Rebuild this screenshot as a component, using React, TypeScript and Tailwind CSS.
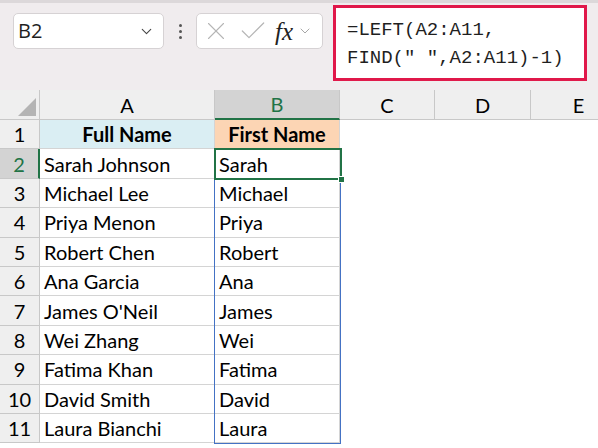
import { ChevronDown, X, Check } from 'lucide-react';

const rows: [string, string][] = [
    ['Sarah Johnson', 'Sarah'],
    ['Michael Lee', 'Michael'],
    ['Priya Menon', 'Priya'],
    ['Robert Chen', 'Robert'],
    ['Ana Garcia', 'Ana'],
    ["James O'Neil", 'James'],
    ['Wei Zhang', 'Wei'],
    ['Fatima Khan', 'Fatima'],
    ['David Smith', 'David'],
    ['Laura Bianchi', 'Laura'],
];

const cellFont = { fontFamily: 'Lato, "Open Sans", sans-serif' };

export default function App() {
    return (
        <div className="w-[598px] h-[448px] overflow-hidden bg-white" style={cellFont}>
            {/* formula bar */}
            <div className="h-[90px] bg-[#f0ecee] border-t-[3px] border-[#dcd8da] flex items-start pt-[10px] pl-[13px]">
                <div className="w-[151px] h-[36px] bg-white border border-[#d6d2d4] rounded-[5px] flex items-center justify-between pl-[4px] pr-[8px]">
                    <span className="text-[20px] text-[#1f1f1f]" style={{ fontFamily: '"Open Sans", sans-serif' }}>
                        B2
                    </span>
                    <ChevronDown size={17} strokeWidth={1.5} className="text-[#444]" />
                </div>
                <div className="w-[32px] h-[36px] flex flex-col items-center justify-center gap-[3px]">
                    <span className="w-[3px] h-[3px] rounded-full bg-[#555]" />
                    <span className="w-[3px] h-[3px] rounded-full bg-[#555]" />
                    <span className="w-[3px] h-[3px] rounded-full bg-[#555]" />
                </div>
                <div className="w-[127px] h-[36px] bg-white border border-[#d6d2d4] rounded-[5px] flex items-center pl-[4px] pr-[2px] gap-[4px]">
                    <X size={30} strokeWidth={0.9} className="text-[#b5b5b5]" />
                    <Check size={32} strokeWidth={0.9} className="text-[#b5b5b5] ml-[2px]" />
                    <span
                        className="text-[25px] italic text-[#222] leading-none ml-[2px]"
                        style={{ fontFamily: '"Liberation Serif", serif' }}
                    >
                        fx
                    </span>
                    <ChevronDown size={16} strokeWidth={1.3} className="text-[#999]" />
                </div>
                <div className="ml-[10px] -mt-[8px] w-[254px] h-[76px] bg-white border-[3px] border-[#e0184a] pl-[11px] pt-[8px]">
                    <div
                        className="text-[19px] leading-[28px] text-[#1f1f1f]"
                        style={{ fontFamily: '"Liberation Mono", "DejaVu Sans Mono", monospace' }}
                    >
                        <div>=LEFT(A2:A11,</div>
                        <div>FIND(" ",A2:A11)-1)</div>
                    </div>
                </div>
            </div>

            {/* sheet */}
            <div className="relative">
                <div className="grid grid-cols-[40px_175px_125px_95px_96px_96px] grid-rows-[30px_repeat(11,29.4px)] text-[20px] text-black">
                    {/* column headers */}
                    <div className="bg-[#efefef] border-r border-b border-[#c8c8c8] flex items-end justify-end p-[3px]">
                        <div className="w-0 h-0 border-l-[18px] border-l-transparent border-b-[18px] border-b-[#b4b4b4]" />
                    </div>
                    <div className="bg-[#efefef] border-r border-b border-[#c8c8c8] flex items-center justify-center">A</div>
                    <div className="bg-[#d3d3d3] border-r border-b-2 border-r-[#c8c8c8] border-b-[#217346] text-[#217346] flex items-center justify-center">
                        B
                    </div>
                    <div className="bg-[#efefef] border-r border-b border-[#c8c8c8] flex items-center justify-center">C</div>
                    <div className="bg-[#efefef] border-r border-b border-[#c8c8c8] flex items-center justify-center">D</div>
                    <div className="bg-[#efefef] border-r border-b border-[#c8c8c8] flex items-center justify-center">E</div>

                    {/* row 1 */}
                    <div className="bg-[#efefef] border-r border-b border-[#c8c8c8] flex items-center justify-center">1</div>
                    <div className="bg-[#daeef3] border-r border-b border-[#d4d4d4] flex items-center justify-center font-bold">
                        Full Name
                    </div>
                    <div className="bg-[#fcd5b4] border-r border-b border-[#d4d4d4] flex items-center justify-center font-bold">
                        First Name
                    </div>
                    <div />
                    <div />
                    <div />

                    {rows.map(([full, first], i) => {
                        const sel = i === 0;
                        return (
                            <div key={full} className="contents">
                                <div
                                    className={
                                        sel
                                            ? 'bg-[#d3d3d3] border-r-2 border-b border-r-[#217346] border-b-[#c8c8c8] text-[#217346] flex items-center justify-center'
                                            : 'bg-[#efefef] border-r border-b border-[#c8c8c8] flex items-center justify-center'
                                    }
                                >
                                    {i + 2}
                                </div>
                                <div className="border-r border-b border-[#d4d4d4] flex items-center pl-[4px]">{full}</div>
                                <div className="border-r border-b border-[#d4d4d4] flex items-center pl-[4px]">{first}</div>
                                <div />
                                <div />
                                <div />
                            </div>
                        );
                    })}
                </div>

                {/* range B2:B11 */}
                <div className="absolute left-[214px] top-[59px] w-[127px] h-[295px] border-[1.5px] border-[#4472c4] pointer-events-none" />
                {/* active cell B2 */}
                <div className="absolute left-[214px] top-[58px] w-[128px] h-[32px] border-2 border-[#217346] pointer-events-none" />
                <div className="absolute left-[338px] top-[86px] w-[7px] h-[7px] bg-[#217346] border border-white pointer-events-none" />
            </div>
        </div>
    );
}
